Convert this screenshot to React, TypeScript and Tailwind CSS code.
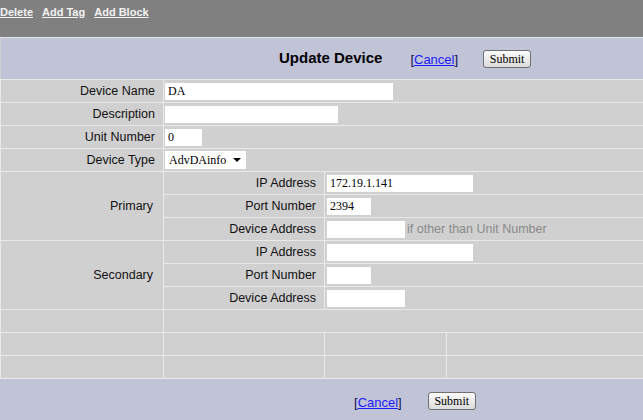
import React from 'react'

const sans = { fontFamily: '"Liberation Sans", Arial, sans-serif' }
const serif = { fontFamily: '"Liberation Serif", "Times New Roman", serif' }

function Field({ w, value = '' }: { w: string; value?: string }) {
  return (
    <input
      readOnly
      value={value}
      style={serif}
      className={`${w} h-[17px] bg-white border-0 outline-none px-[3px] text-[12px] text-black block`}
    />
  )
}

function SubmitBtn() {
  return (
    <button
      style={serif}
      className="w-[48px] h-[18px] rounded-[3px] border border-[#707070] bg-gradient-to-b from-[#fbfbfb] to-[#dcdcdc] text-[12px] leading-none text-black"
    >
      Submit
    </button>
  )
}

function CancelLink() {
  return (
    <span className="text-[13px] text-[#10104a]">
      [<a className="text-[#1a1aff] underline">Cancel</a>]
    </span>
  )
}

const td = 'border border-[#e9e9e9] p-0 align-middle h-[23px]'
const label = `${td} text-right pr-2 text-[12.5px] leading-none text-[#111]`

function Cell({ children, pl = 'pl-[1px]' }: { children?: React.ReactNode; pl?: string }) {
  return <div className={`h-[22px] flex items-center whitespace-nowrap ${pl}`}>{children}</div>
}

export default function App() {
  return (
    <div style={sans} className="w-[643px] h-[420px] bg-[#d0d0d0] overflow-hidden">
      <div className="h-[37px] bg-[#808080] flex items-start pt-[4px] gap-[9px] text-[11px] font-bold text-[#f2f2f2]">
        <a className="underline">Delete</a>
        <a className="underline">Add Tag</a>
        <a className="underline">Add Block</a>
      </div>
      <div className="h-px bg-[#e2e2e8]" />
      <div className="h-[41px] bg-[#c1c3d7] ml-px flex items-center pl-[278px]">
        <span className="text-[15px] font-bold text-black">Update Device</span>
        <span className="ml-[28px] mt-[1px]"><CancelLink /></span>
        <span className="ml-[25px] mt-[-2px]"><SubmitBtn /></span>
      </div>
      <table className="w-[643px] table-fixed border-collapse bg-[#d0d0d0]">
        <colgroup>
          <col className="w-[163px]" />
          <col className="w-[161px]" />
          <col className="w-[122px]" />
          <col className="w-[197px]" />
        </colgroup>
        <tbody>
          <tr>
            <td className={label}>Device Name</td>
            <td className={td} colSpan={3}><Cell><Field w="w-[228px]" value="DA" /></Cell></td>
          </tr>
          <tr>
            <td className={label}>Description</td>
            <td className={td} colSpan={3}><Cell><Field w="w-[173px]" /></Cell></td>
          </tr>
          <tr>
            <td className={label}>Unit Number</td>
            <td className={td} colSpan={3}><Cell><Field w="w-[37px]" value="0" /></Cell></td>
          </tr>
          <tr>
            <td className={label}>Device Type</td>
            <td className={td} colSpan={3}>
              <Cell>
                <span style={serif} className="flex items-center w-[81px] h-[18px] bg-white px-[4px] text-[12px] text-black">
                  AdvDAinfo
                  <svg className="ml-[7px]" width="8" height="4" viewBox="0 0 8 4"><path d="M0 0h8L4 4z" fill="#000" /></svg>
                </span>
              </Cell>
            </td>
          </tr>
          <tr>
            <td className={`${label} pr-[10px]`} rowSpan={3}>Primary</td>
            <td className={label}>IP Address</td>
            <td className={td} colSpan={2}><Cell pl="pl-[2px]"><Field w="w-[146px]" value="172.19.1.141" /></Cell></td>
          </tr>
          <tr>
            <td className={label}>Port Number</td>
            <td className={td} colSpan={2}><Cell pl="pl-[2px]"><Field w="w-[44px]" value="2394" /></Cell></td>
          </tr>
          <tr>
            <td className={label}>Device Address</td>
            <td className={td} colSpan={2}>
              <Cell pl="pl-[2px]">
                <Field w="w-[78px]" />
                <span className="ml-[2px] text-[12.5px] text-[#8a8a8a]">if other than Unit Number</span>
              </Cell>
            </td>
          </tr>
          <tr>
            <td className={`${label} pr-[10px]`} rowSpan={3}>Secondary</td>
            <td className={label}>IP Address</td>
            <td className={td} colSpan={2}><Cell pl="pl-[2px]"><Field w="w-[146px]" /></Cell></td>
          </tr>
          <tr>
            <td className={label}>Port Number</td>
            <td className={td} colSpan={2}><Cell pl="pl-[2px]"><Field w="w-[44px]" /></Cell></td>
          </tr>
          <tr>
            <td className={label}>Device Address</td>
            <td className={td} colSpan={2}><Cell pl="pl-[2px]"><Field w="w-[78px]" /></Cell></td>
          </tr>
          <tr>
            <td className={td} />
            <td className={td} colSpan={3} />
          </tr>
          <tr>
            <td className={td} />
            <td className={td} />
            <td className={td} />
            <td className={td} />
          </tr>
          <tr>
            <td className={td} />
            <td className={td} />
            <td className={td} />
            <td className={td} />
          </tr>
        </tbody>
      </table>
      <div className="h-[41px] bg-[#c1c3d7] flex items-center pl-[354px]">
        <span className="mt-[4px]"><CancelLink /></span>
        <span className="ml-[26px]"><SubmitBtn /></span>
      </div>
    </div>
  )
}
